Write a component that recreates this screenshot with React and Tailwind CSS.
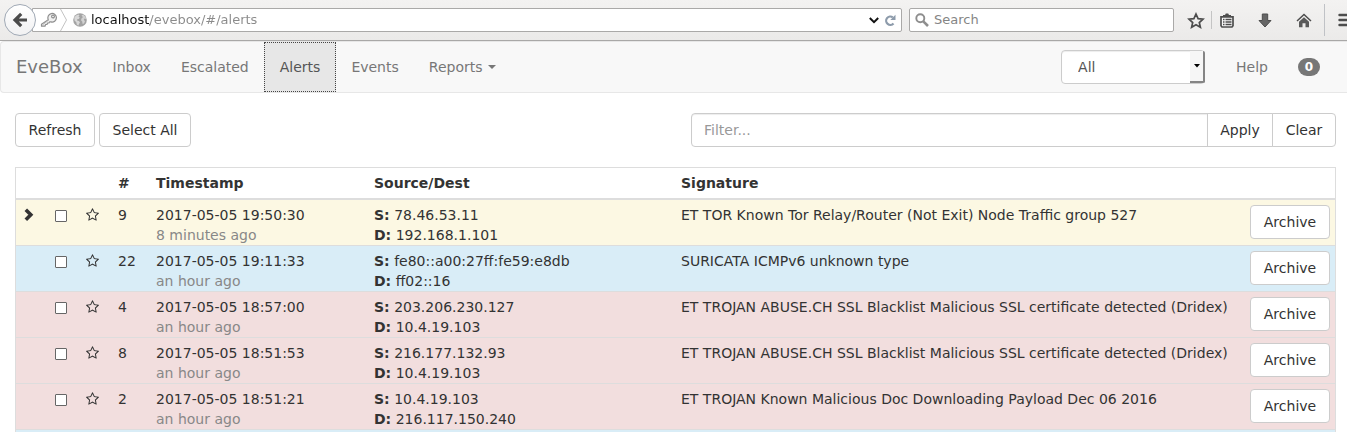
import React from "react";

const alerts = [
  { id: 1, tone: "bg-[#fcf8e3]", active: true, count: 9, time: "2017-05-05 19:50:30", ago: "8 minutes ago", src: "78.46.53.11", dst: "192.168.1.101", sig: "ET TOR Known Tor Relay/Router (Not Exit) Node Traffic group 527" },
  { id: 2, tone: "bg-[#d9edf7]", count: 22, time: "2017-05-05 19:11:33", ago: "an hour ago", src: "fe80::a00:27ff:fe59:e8db", dst: "ff02::16", sig: "SURICATA ICMPv6 unknown type" },
  { id: 3, tone: "bg-[#f2dede]", count: 4, time: "2017-05-05 18:57:00", ago: "an hour ago", src: "203.206.230.127", dst: "10.4.19.103", sig: "ET TROJAN ABUSE.CH SSL Blacklist Malicious SSL certificate detected (Dridex)" },
  { id: 4, tone: "bg-[#f2dede]", count: 8, time: "2017-05-05 18:51:53", ago: "an hour ago", src: "216.177.132.93", dst: "10.4.19.103", sig: "ET TROJAN ABUSE.CH SSL Blacklist Malicious SSL certificate detected (Dridex)" },
  { id: 5, tone: "bg-[#f2dede]", count: 2, time: "2017-05-05 18:51:21", ago: "an hour ago", src: "10.4.19.103", dst: "216.117.150.240", sig: "ET TROJAN Known Malicious Doc Downloading Payload Dec 06 2016" },
];

const button = "h-[34px] border border-[#ccc] bg-white px-3 text-[#333]";

function StarOutline() {
  return (
    <svg viewBox="0 0 1792 1792" className="block size-[14px]" fill="#333" aria-hidden="true">
      <path d="M1137 1004l306-297-422-62-189-382-189 382-422 62 306 297-73 421 378-199 377 199zm527-357q0 22-26 48l-363 354 86 500q1 7 1 20 0 50-41 50-19 0-40-12l-449-236-449 236q-22 12-40 12-21 0-31.5-14.500t-10.500-35.500q0-6 2-20l86-500-364-354q-25-27-25-48 0-37 56-46l502-73 225-455q19-41 49-41t49 41l225 455 502 73q56 9 56 46z" />
    </svg>
  );
}

function KeyIcon() {
  return (
    <svg viewBox="0 0 18 16" className="h-4 w-[18px]" fill="none" stroke="#8f8f8f" strokeWidth="1.2" strokeLinejoin="round" aria-hidden="true">
      <path d="M8.300 7.700A4.300 4.300 0 1 1 11 9.900L9.700 9.800L9 11L7.600 11L7 12.400L5.600 12.500L5 14.200L1.500 14.200L1.500 12.200Z" fill="#f0f0f0" />
      <circle cx="13" cy="4.500" r="1.400" fill="#fff" />
      <path d="M2.500 13L9 7.800" stroke="#b5b5b5" strokeWidth=".8" />
    </svg>
  );
}

function GlobeIcon() {
  return (
    <svg viewBox="0 0 14 14" className="size-[14px]" aria-hidden="true">
      <circle cx="7" cy="7" r="6.800" fill="#a3a3a3" />
      <path d="M1.300 4.500L3 2.500L5.300 1.500L6.500 2.300L5.500 3.800L6.800 4.500L5.800 6L4.200 6.200L4 7.500L5.800 8L7 9.300L6 11L5.300 12.800L3.800 11.500L3.300 9.300L1.500 7.500Z" fill="#d9d9d9" />
      <path d="M8.500 2L10.500 1.800L12.500 4L13 6L11.500 5.500L10.800 6.800L12 8.300L11 10.600L9.600 11L9.200 8.500L8 7.300L8.500 5.500L9.800 4.300Z" fill="#d2d2d2" />
    </svg>
  );
}

function BrowserBar() {
  const icon = "flex h-8 items-center justify-center";
  return (
    <div className="flex h-[41px] items-center border-b border-[#a9a8a7] bg-linear-to-b from-[#f3f2f1] to-[#ebeae9] pl-1 text-[13px]">
      <button type="button" aria-label="Back" className="z-10 flex size-8 shrink-0 items-center justify-center rounded-full border border-[#a0a9b5] bg-linear-to-b from-white to-[#f1f1f2]">
        <svg viewBox="0 0 16 16" className="size-4" fill="none" stroke="#4b4b4b" strokeWidth="3.200" aria-hidden="true">
          <path d="M15 8H4M9.200 1.800L3 8L9.200 14.200" />
        </svg>
      </button>
      <div className="-ml-1 flex h-6 min-w-0 flex-1 items-center rounded-r-xs border border-[#aaa9a8] bg-white pl-[7px]">
        <KeyIcon />
        <svg viewBox="0 0 8 22" className="ml-[2px] h-[22px] w-2" fill="none" stroke="#c3c3c3" aria-hidden="true">
          <path d="M.5 0L6.500 11L.5 22" />
        </svg>
        <span className="ml-[5px]"><GlobeIcon /></span>
        <input
          aria-label="Address"
          defaultValue="localhost/evebox/#/alerts"
          className="ml-1 min-w-0 flex-1 bg-[linear-gradient(to_right,#111_59px,#8a8a8a_59px)] bg-clip-text text-transparent outline-none"
        />
        <button type="button" aria-label="Show history" className="flex w-4 justify-center">
          <svg viewBox="0 0 10 7" className="h-[7px] w-[10px]" fill="none" stroke="#111" strokeWidth="2" aria-hidden="true"><path d="M.8 1L5 5.200L9.200 1" /></svg>
        </button>
        <button type="button" aria-label="Reload" className="mr-[3px] flex w-4 justify-center">
          <svg viewBox="0 0 12 13" className="h-[13px] w-3" aria-hidden="true">
            <path d="M8.800 3.300A4.200 4.200 0 1 0 9.500 9.500" fill="none" stroke="#8d9bab" strokeWidth="2.200" />
            <path d="M11.500 .8V6H6.300Z" fill="#8d9bab" />
          </svg>
        </button>
      </div>
      <label className="ml-[7px] flex h-6 w-[265px] items-center rounded-xs border border-[#aaa9a8] bg-white pl-[5px]">
        <svg viewBox="0 0 14 14" className="size-[14px]" fill="none" stroke="#8e8e8e" aria-hidden="true">
          <circle cx="5.300" cy="5.300" r="4" strokeWidth="1.900" />
          <path d="M8.300 8.300L13 13" strokeWidth="2.600" />
        </svg>
        <input aria-label="Search" placeholder="Search" className="ml-[5px] min-w-0 flex-1 outline-none placeholder:text-[#858585]" />
      </label>
      <div className="flex shrink-0 items-center pl-[13px]">
        <button type="button" aria-label="Bookmark this page" className={`${icon} w-[18px]`}>
          <svg viewBox="0 0 18 17" className="h-[17px] w-[18px]" fill="none" stroke="#4d4d4d" strokeWidth="1.700" aria-hidden="true">
            <path d="M9 2L11.100 6.600L16 7.100L12.300 10.500L13.400 15.300L9 12.800L4.600 15.300L5.700 10.500L2 7.100L6.900 6.600Z" />
          </svg>
        </button>
        <span className="ml-[6px] h-[18px] w-px bg-[#c4c4c4]" />
        <button type="button" aria-label="Bookmarks" className={`${icon} ml-2 w-[14px]`}>
          <svg viewBox="0 0 14 15" className="h-[15px] w-[14px]" aria-hidden="true">
            <path d="M1 3.800H13V12.800L12 14H2L1 12.800Z" fill="#f8f8f8" stroke="#4d4d4d" strokeWidth="1.700" />
            <path d="M3 4V2H5L5.800 .5H8.200L9 2H11V4Z" fill="#4d4d4d" />
            <path d="M3 6.500H4.500M5.500 6.500H11.500M3 9H4.500M5.500 9H11.500M3 11.500H4.500M5.500 11.500H11.500" stroke="#4d4d4d" strokeWidth="1.300" />
          </svg>
        </button>
        <button type="button" aria-label="Downloads" className={`${icon} ml-6 w-[14px]`}>
          <svg viewBox="0 0 14 15" className="h-[15px] w-[14px]" aria-hidden="true">
            <path d="M4.300 1H9.700V7.500H13L7 14L1 7.500H4.300Z" fill="#666" stroke="#4d4d4d" />
          </svg>
        </button>
        <button type="button" aria-label="Home" className={`${icon} ml-6 w-4`}>
          <svg viewBox="0 0 16 15" className="h-[15px] w-4" aria-hidden="true">
            <path d="M1 8L8 1.500L15 8" fill="none" stroke="#4d4d4d" strokeWidth="1.500" />
            <path d="M3 8.800L8 4.300L13 8.800V14.300H9.500V10.300H6.500V14.300H3Z" fill="#5a5a5a" />
          </svg>
        </button>
        <span className="ml-3 h-8 w-px bg-[#c0c2c6]" />
        <button type="button" aria-label="Open menu" className={`${icon} ml-[13px] w-[9px]`}>
          <svg viewBox="0 0 9 14" className="h-[14px] w-[9px]" stroke="#4d4d4d" strokeWidth="2.400" strokeLinecap="round" aria-hidden="true"><path d="M1.500 2H14M1.500 7H14M1.500 12H14" /></svg>
        </button>
      </div>
    </div>
  );
}

function NavBar() {
  const link = "flex h-[50px] items-center px-[15px]";
  return (
    <nav className="flex items-center rounded-l border-y border-l border-[#e7e7e7] bg-[#f8f8f8] pr-3 text-[#777]">
      <a href="#/" className={`${link} text-[18px]`}>EveBox</a>
      <a href="#/inbox" className={link}>Inbox</a>
      <a href="#/escalated" className={link}>Escalated</a>
      <a href="#/alerts" aria-current="page" className="flex h-[50px] items-center bg-[#e7e7e7] px-4 text-[#555] outline-1 -outline-offset-1 outline-dotted outline-[#444]">Alerts</a>
      <a href="#/events" className={link}>Events</a>
      <a href="#/reports" className={`${link} gap-[6px]`}>
        Reports
        <svg viewBox="0 0 8 4" className="h-1 w-2" fill="#777" aria-hidden="true"><path d="M0 0H8L4 4Z" /></svg>
      </a>
      <div className="relative mr-4 ml-auto">
        <select aria-label="Time range" defaultValue="All" className="block h-[34px] w-36 appearance-none rounded border border-[#ccc] bg-white pl-4 text-[#555] shadow-[inset_0_1px_1px_rgba(0,0,0,0.075)]">
          <option>All</option>
        </select>
        <span className="pointer-events-none absolute top-px right-0 flex h-8 w-[15px] items-center justify-center rounded-r-xs border-r-2 border-b-2 border-[#858585] bg-[#f6f6f6]">
          <svg viewBox="0 0 6 4" className="h-1 w-[6px]" aria-hidden="true"><path d="M0 0H6L3 3.500Z" /></svg>
        </span>
      </div>
      <a href="#/help" className={link}>Help</a>
      <a href="#/queue" className={link}>
        <span className="flex h-[18px] w-[22px] items-center justify-center rounded-full bg-[#777] text-xs font-bold text-white">0</span>
      </a>
    </nav>
  );
}

function AlertRow({ alert }) {
  const cell = "border-b border-[#ddd] pt-[5px] pl-[5px] align-top";
  return (
    <tr className={alert.tone}>
      <td className={`${cell} border-l`}>
        {alert.active && (
          <svg viewBox="0 0 10 14" className="mt-[3px] ml-[3px] block h-[14px] w-[10px]" fill="none" stroke="#333" strokeWidth="3.600" aria-label="Selected">
            <path d="M1.800 1.800L6.800 6.800L1.800 11.800" />
          </svg>
        )}
      </td>
      <td className={cell}>
        <input type="checkbox" aria-label={`Select alert ${alert.time}`} className="mt-[5px] block size-3 appearance-none rounded-[1px] border border-[#666] bg-white" />
      </td>
      <td className={cell}>
        <button type="button" aria-label="Escalate" className="mt-[3px] block"><StarOutline /></button>
      </td>
      <td className={cell}>{alert.count}</td>
      <td className={cell}>
        {alert.time}
        <div className="text-[#888]">{alert.ago}</div>
      </td>
      <td className={cell}>
        <div><b>S:</b> {alert.src}</div>
        <div><b>D:</b> {alert.dst}</div>
      </td>
      <td className={cell}>{alert.sig}</td>
      <td className={`${cell} border-r pr-[5px]`}>
        <button type="button" className={`${button} block w-full rounded`}>Archive</button>
      </td>
    </tr>
  );
}

export default function App() {
  const head = "border-t border-b-2 border-[#ddd] py-[5px] pl-[5px] text-left font-bold";
  return (
    <div className="bg-white font-['DejaVu_Sans',sans-serif] text-[14px] leading-5 text-[#333]">
      <BrowserBar />
      <NavBar />
      <main className="pt-5 pr-[11px] pl-[15px]">
        <div className="flex items-center gap-1">
          <button type="button" className={`${button} w-20 rounded`}>Refresh</button>
          <button type="button" className={`${button} w-[92px] rounded`}>Select All</button>
          <form className="ml-auto flex w-[645px]" onSubmit={(e) => e.preventDefault()}>
            <input aria-label="Filter" placeholder="Filter..." className="h-[34px] min-w-0 flex-1 rounded-l border border-[#ccc] px-3 shadow-[inset_0_1px_1px_rgba(0,0,0,0.075)] placeholder:text-[#999]" />
            <button type="submit" className={`${button} -ml-px w-[66px]`}>Apply</button>
            <button type="reset" className={`${button} -ml-px w-16 rounded-r`}>Clear</button>
          </form>
        </div>
        <table className="mt-5 w-full table-fixed border-separate border-spacing-0">
          <colgroup>
            <col className="w-[35px]" />
            <col className="w-[31px]" />
            <col className="w-8" />
            <col className="w-[38px]" />
            <col className="w-[218px]" />
            <col className="w-[307px]" />
            <col />
            <col className="w-[91px]" />
          </colgroup>
          <thead>
            <tr>
              <th className={`${head} border-l`} />
              <th className={head} />
              <th className={head} />
              <th className={head}>#</th>
              <th className={head}>Timestamp</th>
              <th className={head}>Source/Dest</th>
              <th className={head}>Signature</th>
              <th className={`${head} border-r`} />
            </tr>
          </thead>
          <tbody>
            {alerts.map((a) => <AlertRow key={a.id} alert={a} />)}
            <tr className="bg-[#d9edf7]">
              <td colSpan={8} className="h-[2px] border-x border-[#ddd] p-0" />
            </tr>
          </tbody>
        </table>
      </main>
    </div>
  );
}
